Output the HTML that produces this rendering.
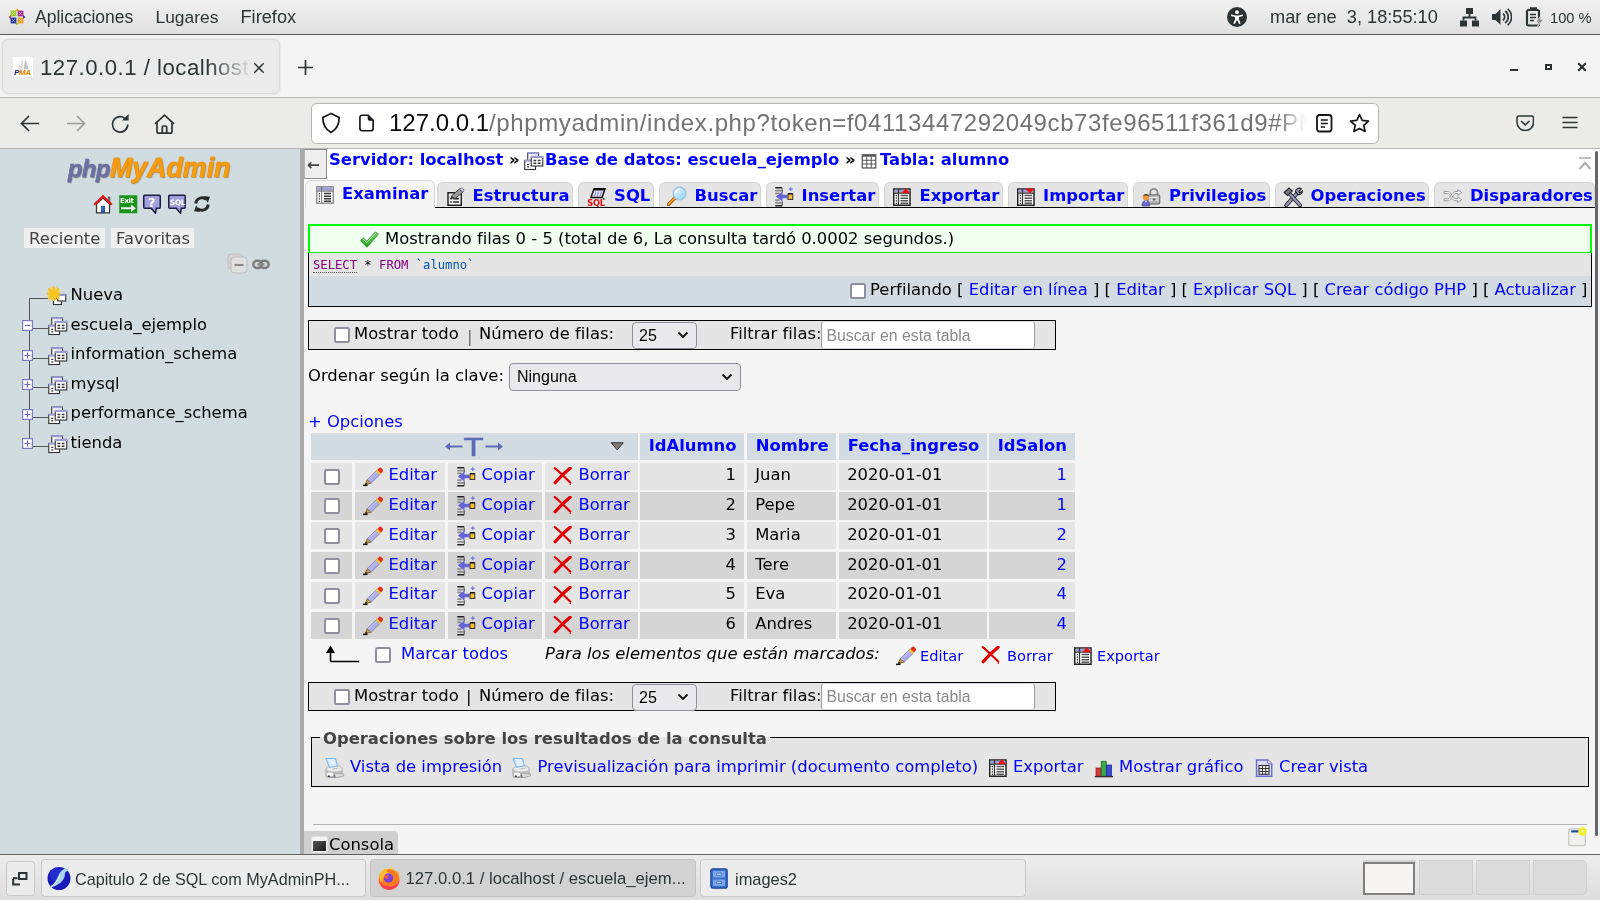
<!DOCTYPE html>
<html lang="es">
<head>
<meta charset="utf-8">
<title>127.0.0.1 / localhost / escuela_ejemplo / alumno | phpMyAdmin</title>
<style>
*{box-sizing:border-box}
html,body{margin:0;padding:0}
body{width:1600px;height:900px;overflow:hidden;position:relative;background:#f5f5f5;font-family:"DejaVu Sans","Liberation Sans",sans-serif;font-size:16.4px;color:#000}
.abs{position:absolute}
svg{display:block}
a{color:#0000ff;text-decoration:none}
/* ---------- GNOME top bar ---------- */
#gtop{position:absolute;left:0;top:0;width:1600px;height:35px;background:linear-gradient(#f0f0f0,#e9e9e9 50%,#dfdfdf);border-bottom:1px solid #5a5a5a;font-family:"Liberation Sans","DejaVu Sans",sans-serif;font-size:17.500px;color:#2e3436}
#gtop span{position:absolute;top:7px;white-space:pre;line-height:20px}
/* ---------- Firefox chrome ---------- */
#fxtabs{position:absolute;left:0;top:35px;width:1600px;height:62px;background:#f4f4f4}
#fxtab{position:absolute;left:3px;top:4.500px;width:276px;height:53.500px;background:#ebebeb;border-radius:5px;box-shadow:0 0 3px rgba(0,0,0,.3)}
#fxnav{position:absolute;left:0;top:97px;width:1600px;height:52px;background:#ebebe9;border-top:1px solid #b9b9b9;border-bottom:1px solid #b4b4b4}
#urlbar{position:absolute;left:311px;top:5px;width:1068px;height:40.500px;background:#fff;border:1px solid #b4b4b4;border-radius:5.500px}
.fxfont{font-family:"Liberation Sans","DejaVu Sans",sans-serif}
/* ---------- phpMyAdmin ---------- */
#side{position:absolute;left:0;top:149px;width:300px;height:705px;background:#d0dce0}
#resizer{position:absolute;left:300px;top:149px;width:4px;height:705px;background:#aaa}
#main{position:absolute;left:304px;top:149px;width:1296px;height:705px;background:#f5f5f5;overflow:hidden}
/* ---------- bottom task bar ---------- */
#gbot{position:absolute;left:0;top:854px;width:1600px;height:46px;background:linear-gradient(#ececec,#dedede);border-top:1px solid #5f5f5f;font-family:"Liberation Sans","DejaVu Sans",sans-serif;font-size:16.400px;color:#2e3436}
.tb{position:absolute;background:#ececec;border:1px solid #c6c6c6;border-radius:3.500px}

/* generic positioned text */
.t{position:absolute;white-space:pre;line-height:20px;height:20px}
.b{font-weight:bold}
.blue{color:#0000ff}
.ic{position:absolute;width:20px;height:20px}
/* top menu tabs */
.tab{position:absolute;top:182px;height:25px;background:#e5e5e5;border:1px solid #d5d5d5;border-bottom:0;border-radius:6px 6px 0 0}
.tab.act{top:179.500px;height:28.500px;background:#f5f5f5;border-color:#d5d5d5}
/* boxes */
.navbox{position:absolute;left:308px;width:748px;height:30px;background:#e5e5e5;border:1.300px solid #000}
.cb{position:absolute;width:16px;height:16px;background:#fff;border:2px solid #8f8f9d;border-radius:2.5px}
.sel{position:absolute;background:#e9e9ed;border:1px solid #8f8f9d;border-radius:4px}
.inp{position:absolute;background:#fff;border:1px solid #9a9aa8;border-top-color:#d8d8e0;border-bottom-color:#d8d8e0;border-radius:3.500px}
/* data table */
#dt{position:absolute;left:308.5px;top:430px;border-collapse:separate;border-spacing:2.5px;table-layout:fixed;font-size:16.4px}
#dt td,#dt th{padding:0;height:27.25px;line-height:20px;white-space:nowrap;position:relative;overflow:hidden}
#dt th{background:#d3dce3;color:#0000ff;font-weight:bold;text-align:left;height:26.5px}
#dt tr.o td{background:#e5e5e5}
#dt tr.e td{background:#d5d5d5}
#dt td.r{text-align:right;padding-right:8px}
#dt td.l{text-align:left;padding-left:9px}
.c{position:absolute;white-space:nowrap;line-height:20px;overflow:hidden}
.c>span,.c>a{line-height:20px;white-space:pre}
#wrap{position:absolute;left:0;top:0;width:1600px;height:900px;overflow:hidden;will-change:transform}
</style>
</head>
<body>
<div id="wrap">
<svg width="0" height="0" style="position:absolute"><defs>
<linearGradient id="g-pen" x1="0" y1="0" x2="1" y2="1"><stop offset="0" stop-color="#d8d8ff"/><stop offset="1" stop-color="#8c8cd0"/></linearGradient>
<linearGradient id="g-lens" x1="0" y1="0" x2="1" y2="1"><stop offset="0" stop-color="#e8fbff"/><stop offset="1" stop-color="#8fd0f5"/></linearGradient>
<linearGradient id="g-ok" x1="0" y1="0" x2="0" y2="1"><stop offset="0" stop-color="#7be06a"/><stop offset="1" stop-color="#1f9a1f"/></linearGradient>
<linearGradient id="g-prn" x1="0" y1="0" x2="0" y2="1"><stop offset="0" stop-color="#e4e4e4"/><stop offset="1" stop-color="#989898"/></linearGradient>
<!-- database (stacked windows) -->
<symbol id="i-db" viewBox="0 0 16 16">
<rect x="3" y="1.6" width="8.6" height="8" fill="#fff" stroke="#333" stroke-width=".9"/><rect x="3" y="1" width="8.6" height="1.6" fill="#9c9cd6"/>
<rect x=".6" y="7.6" width="8.6" height="7.2" fill="#fff" stroke="#333" stroke-width=".9"/><rect x=".4" y="6.8" width="9" height="1.7" fill="#9c9cd6"/>
<path d="M2.6 10.6h1.6M2.6 12.6h1.6" stroke="#333" stroke-width="1"/>
<rect x="5.8" y="4.8" width="9.2" height="7.2" fill="#fff" stroke="#333" stroke-width=".9"/><rect x="5.4" y="3.8" width="10" height="1.8" fill="#9c9cd6"/>
<path d="M7.6 7.6h2.2M11 7.6h2.2M7.6 9.8h2.2M11 9.8h2.2" stroke="#333" stroke-width="1.1"/>
</symbol>
<!-- table (grid) -->
<symbol id="i-tbl" viewBox="0 0 16 16">
<rect x="2" y="2.6" width="12" height="11.6" fill="#fff" stroke="#444" stroke-width="1"/>
<rect x="2" y="2.2" width="12" height="2" fill="#555"/>
<path d="M2 7.4h12M2 10.6h12M6 4v10M10 4v10" stroke="#555" stroke-width=".9"/>
</symbol>
<!-- browse -->
<symbol id="i-browse" viewBox="0 0 16 16">
<rect x="1.4" y="1.4" width="13.2" height="13.2" fill="#fff" stroke="#808080" stroke-width="1"/>
<rect x="1.9" y="1.9" width="12.2" height="2.6" fill="#9c9cd6"/>
<path d="M1.4 4.9h13.2M5.3 1.4v13.2" stroke="#808080" stroke-width=".9"/>
<path d="M3 6.8h1M3 8.9h1M3 11h1M3 13h1" stroke="#222" stroke-width="1"/>
<path d="M7.2 6.8h5.6M7.2 8.9h5.6M7.2 11h5.6M7.2 13h5.6" stroke="#333" stroke-width="1.2"/>
</symbol>
<!-- structure -->
<symbol id="i-props" viewBox="0 0 16 16">
<rect x="1.6" y="4.6" width="10.6" height="10" fill="#f4f4f4" stroke="#111" stroke-width="1.1"/>
<path d="M3.4 9.4h1.2M5.8 9.4h4.6M3.4 12h1.2M5.8 12h4.6" stroke="#222" stroke-width="1.3"/>
<path d="M4.2 7.4L10.6 1.6L13.6 4.2L7.2 9.2Z" fill="#9a9a9a" stroke="#444" stroke-width=".8"/>
<path d="M10.6 1.6L13.6 4.2L14.4 2.2L12.4 .8Z" fill="#c8c8e8" stroke="#666" stroke-width=".6"/>
<path d="M4.2 7.4L3.2 9.4L7.2 9.2Z" fill="#333"/>
</symbol>
<!-- sql -->

<!-- search -->
<symbol id="i-search" viewBox="0 0 16 16">
<path d="M1.2 14.8L7.2 8.6" stroke="#a85a08" stroke-width="2.6" stroke-linecap="round"/>
<path d="M1.3 14.5L7 8.6" stroke="#f89a20" stroke-width="1.5" stroke-linecap="round"/>
<circle cx="10" cy="6" r="5" fill="url(#g-lens)" stroke="#9cc4e4" stroke-width="1.2"/>
<path d="M7 5.2A3.4 3.4 0 0 1 10.4 2.6" stroke="#fff" stroke-width="1.2" fill="none"/>
</symbol>
<!-- insert / copy -->
<symbol id="i-ins" viewBox="0 0 16 16">
<path d="M1 .6h5.600M1 15h5.600" stroke="#222" stroke-width="1.200"/>
<path d="M1 2.900h5.200M1 5.100h3.400M1 10.500h3.400M1 12.700h5.200" stroke="#8a8a8a" stroke-width="1.300"/>
<path d="M6.600 1.200v3.200M6.600 11.400v3.200" stroke="#555" stroke-width=".9"/>
<path d="M1.400 7.600L6.800 3.600V6.200H10.800V9H6.800V11.600Z" fill="#6464d8"/>
<rect x="11.200" y="5.600" width="3.800" height="4.400" fill="#f8c030" stroke="#333" stroke-width=".8"/>
<path d="M11.200 5.300h3.800" stroke="#111" stroke-width="1"/>
<path d="M13.400 .2v3M11.900 1.700h3" stroke="#7070e0" stroke-width=".9"/>
</symbol>
<!-- export -->
<symbol id="i-export" viewBox="0 0 16 16">
<rect x="1.4" y="1.6" width="13" height="13" fill="#fff" stroke="#222" stroke-width="1.2"/>
<rect x="2" y="2.2" width="11.8" height="2.2" fill="#9c9cd6"/>
<path d="M1.4 4.9h13M5.2 1.6v13" stroke="#333" stroke-width="1"/>
<path d="M3 6.8h1M3 8.9h1M3 11h1M3 13h1" stroke="#222" stroke-width="1"/>
<path d="M6.8 6.8h6M6.8 8.9h6M6.8 11h6M6.8 13h6" stroke="#555" stroke-width="1.2"/>
<path d="M7.6 5L11 1L14.6 5Z" fill="#e81010"/>
</symbol>
<!-- import -->
<symbol id="i-import" viewBox="0 0 16 16">
<rect x="1.4" y="1.6" width="13" height="13" fill="#fff" stroke="#222" stroke-width="1.2"/>
<rect x="2" y="2.2" width="11.8" height="2.2" fill="#9c9cd6"/>
<path d="M1.4 4.9h13M5.2 1.6v13" stroke="#333" stroke-width="1"/>
<path d="M3 6.8h1M3 8.9h1M3 11h1M3 13h1" stroke="#222" stroke-width="1"/>
<path d="M6.8 6.8h6M6.8 8.9h6M6.8 11h6M6.8 13h6" stroke="#555" stroke-width="1.2"/>
<path d="M7.4 1.2H14.8L11.1 5.2Z" fill="#e81010"/>
</symbol>
<!-- privileges -->
<symbol id="i-rights" viewBox="0 0 16 16">
<path d="M7.4 6.4V4.4A2.9 2.9 0 0 1 13.2 4.400V6.400" fill="none" stroke="#8a8a8a" stroke-width="1.5"/>
<rect x="5.4" y="6.2" width="9.6" height="7.4" rx="1" fill="#b4b4b4" stroke="#6a6a6a" stroke-width=".9"/>
<path d="M6.4 8.4h7.6M6.4 10.4h7.6" stroke="#ececec" stroke-width="1"/>
<path d="M9.4 9.2h2.2v1.6H9.400Z" fill="#666"/>
<circle cx="3.9" cy="8.3" r="2.4" fill="#f0943c"/>
<path d="M1.4 7.600A2.600 2.600 0 0 1 6.400 7.400L5.200 6.800H2.400Z" fill="#3a3020"/>
<path d="M.8 15.2C.8 11.800 2.200 11 3.900 11S7 11.800 7 15.200Z" fill="#6a6ad0" stroke="#44448c" stroke-width=".6"/>
<path d="M3.100 11L3.900 12.600L4.700 11Z" fill="#fff"/>
</symbol>
<!-- operations (tools) -->
<symbol id="i-ops" viewBox="0 0 16 16">
<path d="M2.600 14.600L11.800 4.400" stroke="#222" stroke-width="3.200" stroke-linecap="round"/>
<path d="M2.600 14.600L11.800 4.400" stroke="#9a9ac0" stroke-width="1.700" stroke-linecap="round"/>
<path d="M10 3.400A3 3 0 0 1 14.600 1.400L12.600 3.600L13.400 4.800L15.600 3.200A3 3 0 0 1 11.800 6Z" fill="#a4a4c8" stroke="#222" stroke-width=".9"/>
<path d="M13.600 14.600L5 5" stroke="#222" stroke-width="3.200" stroke-linecap="round"/>
<path d="M13.600 14.600L5 5" stroke="#9a9ac0" stroke-width="1.700" stroke-linecap="round"/>
<path d="M1 4.400L4.800 .8L7.400 3.200L3.600 6.800Z" fill="#7a7a84" stroke="#222" stroke-width=".9"/>
</symbol>
<!-- triggers (shuffle) -->
<symbol id="i-trig" viewBox="0 0 16 16">
<path d="M.8 4.400H4.200C6.800 4.400 7.800 10.200 10.400 10.200H11.800V8.800L15 11L11.800 13.200V11.800H10.400C6.800 11.800 5.800 6 4.200 6H.8Z" fill="#f6f6f6" stroke="#9a9a9a" stroke-width=".8"/>
<path d="M.8 10.200H4.200C5.800 10.200 6.800 4.400 10.400 4.400H11.800V3L15 5.200L11.800 7.400V6H10.400C7.800 6 6.800 11.800 4.200 11.800H.8Z" fill="#f6f6f6" stroke="#9a9a9a" stroke-width=".8"/>
</symbol>
<!-- success check -->
<symbol id="i-ok" viewBox="0 0 16 16">
<path d="M1.200 9.400L3.600 7.200L6.200 9.800L13.200 2.400L15.400 4.200L6.400 14.600Z" fill="url(#g-ok)" stroke="#2a8a2a" stroke-width=".7"/>
<path d="M3.600 8.200L6.200 10.800L13.200 3.400" stroke="#b8f4a8" stroke-width=".8" fill="none"/>
</symbol>
<!-- pencil -->
<symbol id="i-edit" viewBox="0 0 16 16">
<path d="M0 14.700H3.600" stroke="#111" stroke-width="1.200"/>
<path d="M1.800 14.200L3.400 10L6.600 12.800Z" fill="#c89a3c" stroke="#6a4a10" stroke-width=".6"/>
<path d="M1.600 14.400L2.300 12.600L3.700 13.800Z" fill="#111"/>
<path d="M3.400 10L11 2.600L14 5.600L6.600 12.800Z" fill="url(#g-pen)" stroke="#7a7ab8" stroke-width=".6"/>
<path d="M10.200 3.400L11.500 2.100L14.500 5.100L13.200 6.400Z" fill="#f4c428"/>
<path d="M11.500 2.100L12.700 .9A1.400 1.400 0 0 1 14.600 .8L15.600 1.800A1.400 1.400 0 0 1 15.600 3.800L14.500 5.100Z" fill="#e82a1a"/>
</symbol>
<!-- delete -->
<symbol id="i-drop" viewBox="0 0 16 16">
<path d="M1.400 .9C5 3.600 10 8.800 13.800 12.400" stroke="#e00000" stroke-width="1.700" stroke-linecap="round" fill="none"/>
<path d="M13.700 1C10.200 3.800 4.800 9 1.700 12.600" stroke="#e00000" stroke-width="2.600" stroke-linecap="round" fill="none"/>
<circle cx="13.800" cy="13.800" r=".6" fill="#e00000"/>
</symbol>
<!-- printer -->
<symbol id="i-print" viewBox="0 0 16 16">
<path d="M.6 9.200C.6 7.400 2.600 6.700 4.400 6.900L9.800 6.200C12.200 6 13.800 7.200 13.800 8.800V12.200L15 13V14.400L8.400 16H3.600C1.600 16 .6 15 .6 13.600Z" fill="url(#g-prn)" stroke="#a4a4a4" stroke-width=".5"/>
<ellipse cx="7.400" cy="8.900" rx="5.800" ry="1.900" fill="#ececec"/>
<path d="M5.800 8.800L10.800 8.200" stroke="#bdbdbd" stroke-width=".9"/>
<path d="M.7 .4H8.400L10 6.300L3.600 7.500Z" fill="#c4e2fc" stroke="#7ab4ea" stroke-width=".8"/>
<path d="M2.600 1.200H7.600L8.800 5.800L4.400 6.600Z" fill="#e0f0ff"/>
<path d="M7.600 12.400L14.600 12.800V14.400L8.200 15.800Z" fill="#dcdcdc" stroke="#9a9a9a" stroke-width=".4"/>
<path d="M1.400 12.200C3 11.400 5 11.600 6.600 12.400L6.400 14.600H1.400Z" fill="#f6f6f6"/>
<circle cx="3.100" cy="14.500" r=".7" fill="#333"/>
<path d="M7.400 13.400L8.200 15.600" stroke="#5a5a9a" stroke-width=".6"/>
</symbol>
<!-- chart -->
<symbol id="i-chart" viewBox="0 0 16 16">
<rect x="1.600" y="8" width="4" height="6.600" fill="#d83a3a" stroke="#8c1c1c" stroke-width=".6"/>
<rect x="5.800" y="2.600" width="4" height="12" fill="#3aa84a" stroke="#1c6c2a" stroke-width=".6"/>
<rect x="10" y="5.600" width="4" height="9" fill="#3a4ad8" stroke="#1c2a8c" stroke-width=".6"/>
<path d="M.600 14.900H15.200" stroke="#3a2a2a" stroke-width="1.100"/>
</symbol>
<!-- view -->
<symbol id="i-view" viewBox="0 0 16 16">
<path d="M2 1.600H11L14.200 4.600V14.600H2Z" fill="#d8dcfa" stroke="#6a6ad0" stroke-width="1.100"/>
<path d="M11 1.600V4.600H14.200" fill="#fff" stroke="#6a6ad0" stroke-width=".8"/>
<rect x="4" y="6" width="8" height="7" fill="#fff" stroke="#333" stroke-width=".9"/>
<path d="M4 8.400h8M4 10.700h8M6.700 6v7M9.400 6v7" stroke="#333" stroke-width=".8"/>
</symbol>
<!-- new window -->
<symbol id="i-win" viewBox="0 0 16 16">
<rect x="1.400" y="1.400" width="13.200" height="13.400" rx="1.600" fill="#f0f0ee" stroke="#c6c8c4" stroke-width="1"/>
<path d="M3.400 3.500H10" stroke="#1c4a94" stroke-width="1.700"/>
<circle cx="12.400" cy="3.500" r="3.400" fill="#f4ee2a"/><circle cx="12.400" cy="3.500" r=".9" fill="#fffde0"/>
</symbol>
<!-- home -->
<symbol id="i-home" viewBox="0 0 16 16">
<path d="M12 2.400V6L13.600 7.400V2.400Z" fill="#888" stroke="#444" stroke-width=".5"/>
<path d="M2.800 8V15H13.200V8L8 3.200Z" fill="#fff" stroke="#333" stroke-width="1"/>
<path d="M1 8.600L8 2L15 8.600" fill="none" stroke="#e01818" stroke-width="1.900" stroke-linejoin="miter"/>
<rect x="6.600" y="10" width="2.800" height="5" fill="#2a6ab8" stroke="#1a3a6a" stroke-width=".5"/>
</symbol>
<!-- exit -->

<!-- help -->

<!-- sql help -->

<!-- reload -->
<symbol id="i-reload" viewBox="0 0 16 16">
<path d="M3 7.600A5 5 0 0 1 11.400 4.400" fill="none" stroke="#2a2a2a" stroke-width="2.300"/>
<path d="M9.400 1.600L14.400 2.200L12.600 7Z" fill="#2a2a2a"/>
<path d="M13 8.400A5 5 0 0 1 4.600 11.600" fill="none" stroke="#2a2a2a" stroke-width="2.300"/>
<path d="M6.600 14.400L1.600 13.800L3.400 9Z" fill="#2a2a2a"/>
</symbol>
<!-- new db -->
<symbol id="i-newdb" viewBox="0 0 16 16">
<rect x="5.200" y="10.200" width="6.400" height="4.600" fill="#fff" stroke="#333" stroke-width=".9"/>
<rect x="8.600" y="7" width="6.400" height="5" fill="#fff" stroke="#333" stroke-width=".9"/><rect x="8.400" y="6.200" width="6.800" height="1.500" fill="#8c8cd0"/>
<path d="M5.400 .4V12M0 6.200H10.800M1.200 2L9.600 10.400M9.600 2L1.200 10.400" stroke="#f8c010" stroke-width="1.700"/>
<path d="M3.200 .8L7.600 11.600M7.600 .8L3.200 11.600M.3 4L10.500 8.400M.3 8.400L10.500 4" stroke="#f8cc30" stroke-width=".9"/>
<circle cx="5.400" cy="6.200" r="2.100" fill="#fcc010"/>
</symbol>
</defs></svg>

<!-- GNOME TOP BAR -->
<div id="gtop">
<!-- CentOS-like logo -->
<svg class="abs" style="left:8px;top:8px" width="18" height="18" viewBox="0 0 18 18">
<path d="M9 .6L11.200 3H6.800Z" fill="#f0a020"/><path d="M9 17.400L11.200 15H6.800Z" fill="#9ccd2a"/><path d="M.6 9L3 6.800V11.200Z" fill="#a8328c"/><path d="M17.400 9L15 6.800V11.200Z" fill="#2a3a9c"/>
<rect x="2.600" y="2.600" width="5.800" height="5.800" fill="#9ccd2a"/><rect x="9.600" y="2.600" width="5.800" height="5.800" fill="#a8328c"/>
<rect x="2.600" y="9.600" width="5.800" height="5.800" fill="#2a3a9c"/><rect x="9.600" y="9.600" width="5.800" height="5.800" fill="#f0a020"/>
<path d="M4 4L7 7M7 4L4 7M11 4L14 7M14 4L11 7M4 11L7 14M7 11L4 14M11 11L14 14M14 11L11 14" stroke="#fff" stroke-opacity=".45" stroke-width=".8"/>
</svg>
<span style="left:35px">Aplicaciones</span>
<span style="left:155.500px;font-size:17.400px">Lugares</span>
<span style="left:240.500px;font-size:18.200px;top:6.700px">Firefox</span>
<!-- accessibility -->
<svg class="abs" style="left:1226.500px;top:6.500px" width="20" height="20" viewBox="0 0 20 20"><circle cx="10" cy="10" r="10" fill="#2e3436"/><circle cx="10" cy="5.200" r="1.900" fill="#fff"/><path d="M4.200 7.600L8.400 8.400H11.600L15.800 7.600L16 9L12 10V12.400L13.600 16.600L12.200 17.100L10 12.800L7.800 17.100L6.400 16.600L8 12.400V10L4 9Z" fill="#fff"/></svg>
<span style="left:1270px;font-size:18.200px">mar ene  3, 18:55:10</span>
<!-- network -->
<svg class="abs" style="left:1460px;top:8px" width="19" height="19" viewBox="0 0 19 19"><rect x="6" y="0" width="7" height="6" fill="#2e3436"/><rect x="0" y="12.500" width="7" height="6" fill="#2e3436"/><rect x="12" y="12.500" width="7" height="6" fill="#2e3436"/><path d="M9.500 6V9.500M3.500 12.500V9.500H15.500V12.500" stroke="#2e3436" stroke-width="1.800" fill="none"/></svg>
<!-- volume -->
<svg class="abs" style="left:1492px;top:8px" width="20" height="18" viewBox="0 0 20 18"><path d="M0 6H3.500L8.500 1.200V16.800L3.500 12H0Z" fill="#2e3436"/><path d="M11 5.500A4.500 4.500 0 0 1 11 12.500" stroke="#2e3436" stroke-width="1.700" fill="none"/><path d="M13.200 3A7.500 7.500 0 0 1 13.200 15" stroke="#2e3436" stroke-width="1.700" fill="none"/><path d="M15.600 .8A10.500 10.500 0 0 1 15.600 17.200" stroke="#2e3436" stroke-width="1.700" fill="none"/></svg>
<!-- battery -->
<svg class="abs" style="left:1525px;top:7px" width="20" height="20" viewBox="0 0 20 20"><path d="M5 1.200H11V3" stroke="#2e3436" stroke-width="2" fill="none"/><rect x="2" y="3" width="12" height="15.500" rx="1.500" fill="none" stroke="#2e3436" stroke-width="2.200"/><path d="M5 7.500H11M5 10.500H11M5 13.500H9" stroke="#2e3436" stroke-width="1.600"/><path d="M15.500 9L11 15H14L12.500 19.500L18.500 12.500H15Z" fill="#8a8a8a" stroke="#e6e6e6" stroke-width=".7"/></svg>
<span style="left:1550px;font-size:14.700px;top:7.500px">100 %</span>
</div>

<!-- FIREFOX CHROME -->
<div id="fxtabs">
<div id="fxtab"></div>
<!-- favicon -->
<svg class="abs" style="left:13px;top:22px" width="20" height="20" viewBox="0 0 20 20"><rect width="20" height="20" fill="#fff"/><path d="M7 12.500C7.500 8 8.500 4.500 9.500 1.500C9.800 6 9.600 9.500 9.400 12.500Z" fill="#d4d4d4"/><path d="M10.600 12.500C11 8 11.600 5 12.400 2.500C14 6 15 9.500 15.600 12.500Z" fill="#c4c4c4"/><path d="M4.500 12.500C5 10 5.800 8 6.800 6.400C6.900 8.500 6.700 10.500 6.400 12.500Z" fill="#e0e0e0"/>
<text x="1.200" y="18.200" font-family="'Liberation Sans','DejaVu Sans',sans-serif" font-size="7.800" font-weight="bold" font-style="italic" fill="#2a2a6a" stroke="#2a2a6a" stroke-width=".2" letter-spacing="-.3">P<tspan fill="#e88a10" stroke="#e88a10">MA</tspan></text></svg>
<span class="abs fxfont" style="left:40px;top:18px;width:212px;height:30px;line-height:30px;font-size:22.200px;letter-spacing:.5px;color:#2e3436;white-space:nowrap;overflow:hidden;-webkit-mask-image:linear-gradient(90deg,#000 0,#000 168px,rgba(0,0,0,.12) 207px,transparent 212px);mask-image:linear-gradient(90deg,#000 0,#000 168px,rgba(0,0,0,.12) 207px,transparent 212px)">127.0.0.1 / localhost / escuela_ejemplo / alumno | phpMyAdmin 4.4.15.10</span>
<svg class="abs" style="left:253px;top:26.500px" width="12" height="12" viewBox="0 0 12 12"><path d="M1.300 1.300L10.700 10.700M10.700 1.300L1.300 10.700" stroke="#2e3436" stroke-width="1.500"/></svg>
<svg class="abs" style="left:297px;top:24px" width="17" height="17" viewBox="0 0 17 17"><path d="M8.500 1V16M1 8.500H16" stroke="#2e3436" stroke-width="1.700"/></svg>
<!-- window controls -->
<div class="abs" style="left:1510px;top:33.500px;width:8px;height:2.500px;background:#2e3436"></div>
<div class="abs" style="left:1545px;top:28.500px;width:6.500px;height:6.500px;border:2px solid #2e3436"></div>
<svg class="abs" style="left:1577px;top:26.500px" width="10" height="10" viewBox="0 0 10 10"><path d="M1.200 1.200L8.800 8.800M8.800 1.200L1.200 8.800" stroke="#2e3436" stroke-width="2.200"/></svg>
</div>
<div id="fxnav">
<!-- back -->
<svg class="abs" style="left:20px;top:17px" width="20" height="17" viewBox="0 0 20 17"><path d="M1.500 8.500H19M9 1L1.500 8.500L9 16" fill="none" stroke="#2e3436" stroke-width="1.700"/></svg>
<!-- forward -->
<svg class="abs" style="left:65.500px;top:17px" width="20" height="17" viewBox="0 0 20 17"><path d="M1 8.500H18.500M11 1L18.500 8.500L11 16" fill="none" stroke="#9c9c9c" stroke-width="1.700"/></svg>
<!-- reload -->
<svg class="abs" style="left:110px;top:16px" width="21" height="20" viewBox="0 0 21 20"><path d="M17.800 10.500A7.700 7.700 0 1 1 14.800 4.300" fill="none" stroke="#2e3436" stroke-width="1.700"/><path d="M12 6.400H18.600V0Z" fill="#2e3436"/></svg>
<!-- home -->
<svg class="abs" style="left:154px;top:15.500px" width="21" height="21" viewBox="0 0 21 21"><path d="M1 9.800L10.500 1.200L20 9.800" fill="none" stroke="#2e3436" stroke-width="1.700" stroke-linejoin="round"/><path d="M3 8.500V17.500Q3 19.200 4.700 19.200H16.300Q18 19.200 18 17.500V8.500" fill="none" stroke="#2e3436" stroke-width="1.700"/><path d="M8.300 19V13.200Q8.300 12 9.500 12H11.500Q12.700 12 12.700 13.200V19" fill="none" stroke="#2e3436" stroke-width="1.700"/></svg>
<div id="urlbar"></div>
<!-- shield -->
<svg class="abs" style="left:321px;top:14px" width="20" height="22" viewBox="0 0 20 22"><path d="M10 1.500L18.200 5.500C18.200 12 15.500 17.500 10 20.500C4.500 17.500 1.800 12 1.800 5.500Z" fill="none" stroke="#15141a" stroke-width="1.700" stroke-linejoin="round"/></svg>
<!-- page -->
<svg class="abs" style="left:358.500px;top:15.500px" width="15.500" height="18" viewBox="0 0 17 19"><path d="M3.500 1H10L15.500 6.500V15.500Q15.500 18 13 18H3.500Q1 18 1 15.500V3.500Q1 1 3.500 1Z" fill="none" stroke="#15141a" stroke-width="1.800"/><path d="M9.500 1L15.500 7H11.500Q9.500 7 9.500 5Z" fill="#15141a"/></svg>
<span class="abs fxfont" style="left:389px;top:9px;height:32px;line-height:32px;font-size:24px;color:#0c0c0d;white-space:pre;width:918px;overflow:hidden;-webkit-mask-image:linear-gradient(90deg,#000 0,#000 890px,rgba(0,0,0,.15) 912px,transparent 918px);mask-image:linear-gradient(90deg,#000 0,#000 890px,rgba(0,0,0,.15) 912px,transparent 918px)">127.0.0.1<span style="color:#737373;letter-spacing:.6px">/phpmyadmin/index.php?token=f04113447292049cb73fe96511f361d9#PMAURL-3:sql.php?db=escuela_ejemplo</span></span>
<!-- reader -->
<svg class="abs" style="left:1315.500px;top:15.500px" width="17" height="19" viewBox="0 0 17 19"><rect x="1" y="1" width="14.500" height="16.500" rx="2.500" fill="none" stroke="#15141a" stroke-width="1.800"/><path d="M4.800 6H11.800M4.800 9.500H11.800M4.800 13H9" stroke="#15141a" stroke-width="1.600"/></svg>
<!-- star -->
<svg class="abs" style="left:1348.500px;top:15px" width="21" height="20" viewBox="0 0 21 20"><path d="M10.500 1.500L13.200 7.300L19.500 8L14.800 12.300L16.100 18.500L10.500 15.400L4.900 18.500L6.200 12.300L1.500 8L7.800 7.300Z" fill="none" stroke="#15141a" stroke-width="1.700" stroke-linejoin="round"/></svg>
<!-- pocket -->
<svg class="abs" style="left:1515.500px;top:16.500px" width="18.500" height="16.500" viewBox="0 0 19 17"><path d="M3 1H16Q18 1 18 3V7.500C18 12.500 14 16 9.500 16C5 16 1 12.500 1 7.500V3Q1 1 3 1Z" fill="none" stroke="#2e3436" stroke-width="1.600"/><path d="M5.200 6.200L9.500 10.200L13.800 6.200" fill="none" stroke="#2e3436" stroke-width="1.600"/></svg>
<!-- hamburger -->
<svg class="abs" style="left:1562px;top:18px" width="16" height="13" viewBox="0 0 16 13"><path d="M.5 1.500H15.500M.5 6.500H15.500M.5 11.500H15.500" stroke="#2e3436" stroke-width="1.500"/></svg>
</div>

<!-- PMA -->
<div id="side"></div>
<div id="resizer"></div>
<div id="main"></div>
<!-- sidebar content -->
<div class="abs" id="logo" style="left:68px;top:150px;width:175px;height:36px;font-family:'Liberation Sans','DejaVu Sans',sans-serif;font-weight:bold;font-style:italic;white-space:nowrap;line-height:36px;filter:blur(.5px)"><span style="font-size:23.500px;color:#6d6fa0;letter-spacing:-.4px;-webkit-text-stroke:.6px #6d6fa0;text-shadow:.8px 1.200px 1.200px rgba(50,50,70,.6)">php</span><span style="font-size:26.800px;color:#f89c10;letter-spacing:0;-webkit-text-stroke:.7px #f0940c;text-shadow:0 0 1.200px #b87408,.8px 1.200px 1.200px rgba(120,80,20,.55)">MyAdmin</span></div>
<svg class="ic" style="left:93px;top:194px" viewBox="0 0 16 16"><use href="#i-home"/></svg>
<svg class="ic" style="left:118px;top:194px" viewBox="0 0 16 16"><rect x="1" y="1" width="14.400" height="14.400" fill="#189418"/>
<text x="1.600" y="7" font-family="'DejaVu Sans','Liberation Sans',sans-serif" font-size="5.600" font-weight="bold" fill="#fff" letter-spacing="-.3">Exit</text>
<path d="M2.400 11.400H12" stroke="#fff" stroke-width="1.500"/><path d="M10.400 8.400L14.200 11.400L10.400 14.400Z" fill="#fff"/></svg>
<svg class="ic" style="left:142px;top:194px" viewBox="0 0 16 16"><path d="M1.400 1.800Q1.400 1 2.200 1H13.800Q14.600 1 14.600 1.800V10.600Q14.600 11.400 13.800 11.400H11.400L10.800 15.400L7.400 11.400H2.200Q1.400 11.400 1.400 10.600Z" fill="#a0a0dc" stroke="#1c1c44" stroke-width="1.200"/>
<text x="4.800" y="10.200" font-family="'DejaVu Sans','Liberation Sans',sans-serif" font-size="10.500" font-weight="bold" fill="#fff">?</text></svg>
<svg class="ic" style="left:167px;top:194px" viewBox="0 0 16 16"><path d="M1.400 1.800Q1.400 1 2.200 1H13.800Q14.600 1 14.600 1.800V10.600Q14.600 11.400 13.800 11.400H11.400L10.800 15.400L7.400 11.400H2.200Q1.400 11.400 1.400 10.600Z" fill="#a0a0dc" stroke="#1c1c44" stroke-width="1.200"/>
<text x="2.200" y="8.600" font-family="'DejaVu Sans','Liberation Sans',sans-serif" font-size="6" font-weight="bold" fill="#fff" letter-spacing="-.3">SQL</text></svg>
<svg class="ic" style="left:192px;top:194px" viewBox="0 0 16 16"><use href="#i-reload"/></svg>
<div class="abs" style="left:24px;top:228px;width:81px;height:20px;background:#f0f0f0"></div><span class="t" style="left:29px;top:229px;color:#444">Reciente</span>
<div class="abs" style="left:111px;top:228px;width:83px;height:20px;background:#f0f0f0"></div><span class="t" style="left:116px;top:229px;color:#444">Favoritas</span>
<svg class="abs" style="left:227px;top:253px" width="21" height="21" viewBox="0 0 21 21"><rect x="1" y="1" width="15" height="15" rx="3.500" fill="#d4d4d4" stroke="#c0c0c0"/><rect x="4" y="4" width="16" height="16" rx="3.500" fill="#e0e0e0" stroke="#bdbdbd"/><path d="M7.500 12H16.500" stroke="#8a8a8a" stroke-width="2.200"/></svg>
<svg class="abs" style="left:252px;top:258.500px" width="18" height="11" viewBox="0 0 18 11"><rect x="1.300" y="1.800" width="8.600" height="7.200" rx="3.600" fill="none" stroke="#7c7c7c" stroke-width="2.400"/><rect x="8.100" y="1.800" width="8.600" height="7.200" rx="3.600" fill="none" stroke="#7c7c7c" stroke-width="2.400"/><path d="M5.400 5.400H12.600" stroke="#8a8a8a" stroke-width="2.400"/></svg>
<div class="abs" style="left:29px;top:298px;width:1px;height:141px;background:#555"></div>
<div class="abs" style="left:29px;top:298px;width:19px;height:1px;background:#555"></div>
<svg class="ic" style="left:47px;top:286px" viewBox="0 0 16 16"><use href="#i-newdb"/></svg>
<span class="t" style="left:70.500px;top:285px">Nueva</span>
<div class="abs" style="left:33px;top:328px;width:15px;height:1px;background:#555"></div>
<svg class="abs" style="left:22px;top:320px" width="11" height="11" viewBox="0 0 11 11"><rect x=".6" y=".6" width="9.800" height="9.800" fill="#fff" stroke="#7c7cc4" stroke-width="1.200"/><path d="M3 5.500H8" stroke="#6c6cb8" stroke-width="1.200"/></svg>
<svg class="ic" style="left:47.500px;top:316.0px" viewBox="0 0 16 16"><use href="#i-db"/></svg>
<span class="t" style="left:70.500px;top:315px">escuela_ejemplo</span>
<div class="abs" style="left:33px;top:358px;width:15px;height:1px;background:#555"></div>
<svg class="abs" style="left:22px;top:350px" width="11" height="11" viewBox="0 0 11 11"><rect x=".6" y=".6" width="9.800" height="9.800" fill="#fff" stroke="#7c7cc4" stroke-width="1.200"/><path d="M2.500 5.500H8.500M5.500 2.500V8.500" stroke="#6c6cb8" stroke-width="1.200"/></svg>
<svg class="ic" style="left:47.500px;top:345.6px" viewBox="0 0 16 16"><use href="#i-db"/></svg>
<span class="t" style="left:70.500px;top:344px">information_schema</span>
<div class="abs" style="left:33px;top:387px;width:15px;height:1px;background:#555"></div>
<svg class="abs" style="left:22px;top:379px" width="11" height="11" viewBox="0 0 11 11"><rect x=".6" y=".6" width="9.800" height="9.800" fill="#fff" stroke="#7c7cc4" stroke-width="1.200"/><path d="M2.500 5.500H8.500M5.500 2.500V8.500" stroke="#6c6cb8" stroke-width="1.200"/></svg>
<svg class="ic" style="left:47.500px;top:375.2px" viewBox="0 0 16 16"><use href="#i-db"/></svg>
<span class="t" style="left:70.500px;top:374px">mysql</span>
<div class="abs" style="left:33px;top:417px;width:15px;height:1px;background:#555"></div>
<svg class="abs" style="left:22px;top:409px" width="11" height="11" viewBox="0 0 11 11"><rect x=".6" y=".6" width="9.800" height="9.800" fill="#fff" stroke="#7c7cc4" stroke-width="1.200"/><path d="M2.500 5.500H8.500M5.500 2.500V8.500" stroke="#6c6cb8" stroke-width="1.200"/></svg>
<svg class="ic" style="left:47.500px;top:404.8px" viewBox="0 0 16 16"><use href="#i-db"/></svg>
<span class="t" style="left:70.500px;top:403px">performance_schema</span>
<div class="abs" style="left:33px;top:446px;width:15px;height:1px;background:#555"></div>
<svg class="abs" style="left:22px;top:438px" width="11" height="11" viewBox="0 0 11 11"><rect x=".6" y=".6" width="9.800" height="9.800" fill="#fff" stroke="#7c7cc4" stroke-width="1.200"/><path d="M2.500 5.500H8.500M5.500 2.500V8.500" stroke="#6c6cb8" stroke-width="1.200"/></svg>
<svg class="ic" style="left:47.500px;top:434.4px" viewBox="0 0 16 16"><use href="#i-db"/></svg>
<span class="t" style="left:70.500px;top:433px">tienda</span>

<div id="pma" style="position:absolute;left:0;top:0;width:1600px;height:854px;overflow:hidden">
<!-- white floating menubar -->
<div class="abs" style="left:304px;top:149px;width:1296px;height:58px;background:#fff"></div>
<div class="abs" style="left:435px;top:207px;width:1161px;height:1px;background:#000"></div>
<!-- go-back box -->
<div class="abs" style="left:304px;top:149px;width:23px;height:30px;background:#eee;border:1px solid #8c8c8c;border-left-color:#b4b4b4"></div>
<span class="t b" style="left:307px;top:155px;font-size:15.500px;color:#444">←</span>
<!-- breadcrumb -->
<span class="t b blue" style="left:329px;top:150px">Servidor: localhost</span>
<span class="t b" style="left:509px;top:150px;color:#000">»</span>
<svg class="ic" style="left:524px;top:151px" viewBox="0 0 16 16"><use href="#i-db"/></svg>
<span class="t b blue" style="left:545px;top:150px">Base de datos: escuela_ejemplo</span>
<span class="t b" style="left:845px;top:150px;color:#000">»</span>
<svg class="abs" style="left:860px;top:152px;width:18px;height:18px" viewBox="0 0 16 16"><use href="#i-tbl"/></svg>
<span class="t b blue" style="left:880px;top:150px">Tabla: alumno</span>
<!-- tabs -->
<div class="tab act" style="left:304.5px;width:130px"></div>
<svg class="ic" style="left:315px;top:185px" viewBox="0 0 16 16"><use href="#i-browse"/></svg>
<span class="t b blue" style="left:342px;top:184px">Examinar</span>

<div class="tab" style="left:437px;width:135.5px"></div>
<svg class="ic" style="left:446px;top:187px" viewBox="0 0 16 16"><use href="#i-props"/></svg>
<span class="t b blue" style="left:472.6px;top:186px">Estructura</span>

<div class="tab" style="left:578px;width:75.75px"></div>
<svg class="ic" style="left:587px;top:187px" viewBox="0 0 16 16"><path d="M5.6 1.4H14.4L12 8.4H3.2Z" fill="#e8e8ff" stroke="#111" stroke-width="1.2"/>
<path d="M5.6 1.4H14.4L14 2.8H5.2Z" fill="#111"/>
<path d="M7.2 3.6L5.8 7.6M9.4 3.6L8 7.6M11.6 3.6L10.2 7.6" stroke="#8a8ad0" stroke-width=".9"/>
<path d="M12.4 8.2L14.6 9.6L13 10.4" fill="#333"/>
<text x="0.2" y="15.2" font-family="'DejaVu Sans','Liberation Sans',sans-serif" font-size="6.6" font-weight="bold" fill="#e01010" letter-spacing="-.2">SQL</text></svg>
<span class="t b blue" style="left:614.1px;top:186px">SQL</span>

<div class="tab" style="left:659.25px;width:101.5px"></div>
<svg class="ic" style="left:667px;top:186px" viewBox="0 0 16 16"><use href="#i-search"/></svg>
<span class="t b blue" style="left:694.6px;top:186px">Buscar</span>

<div class="tab" style="left:766px;width:112.75px"></div>
<svg class="ic" style="left:774px;top:187px" viewBox="0 0 16 16"><use href="#i-ins"/></svg>
<span class="t b blue" style="left:801.6px;top:186px">Insertar</span>

<div class="tab" style="left:884.25px;width:118.25px"></div>
<svg class="ic" style="left:892px;top:187px" viewBox="0 0 16 16"><use href="#i-export"/></svg>
<span class="t b blue" style="left:919.6px;top:186px">Exportar</span>

<div class="tab" style="left:1008.25px;width:119.25px"></div>
<svg class="ic" style="left:1016px;top:187px" viewBox="0 0 16 16"><use href="#i-import"/></svg>
<span class="t b blue" style="left:1043.1px;top:186px">Importar</span>

<div class="tab" style="left:1133.25px;width:136.25px"></div>
<svg class="ic" style="left:1141px;top:187px" viewBox="0 0 16 16"><use href="#i-rights"/></svg>
<span class="t b blue" style="left:1169.1px;top:186px">Privilegios</span>

<div class="tab" style="left:1275px;width:153.75px"></div>
<svg class="ic" style="left:1283px;top:187px" viewBox="0 0 16 16"><use href="#i-ops"/></svg>
<span class="t b blue" style="left:1310.6px;top:186px">Operaciones</span>

<div class="tab" style="left:1434.25px;width:161px"></div>
<svg class="ic" style="left:1443px;top:186px" viewBox="0 0 16 16"><use href="#i-trig"/></svg>
<span class="t b blue" style="left:1470px;top:186px">Disparadores</span>

<!-- success message -->
<div class="abs" style="left:308px;top:224px;width:1284px;height:29.5px;background:#f0fff0;border:2px solid #00ff00"></div>
<svg class="ic" style="left:359px;top:229px" viewBox="0 0 16 16"><use href="#i-ok"/></svg>
<span class="t" style="left:385px;top:229px">Mostrando filas 0 - 5 (total de 6, La consulta tardó 0.0002 segundos.)</span>
<!-- sql box -->
<div class="abs" style="left:308px;top:253px;width:1284px;height:54px;background:#d3dce3;border:1px solid #000;border-top:0"></div>
<div class="abs" style="left:309px;top:253px;width:1282px;height:22.5px;background:#e5e5e5"></div>
<span class="t" style="left:313px;top:254.800px;font-family:'DejaVu Sans Mono','Liberation Mono',monospace;font-size:12.2px"><span style="color:#800080;border-bottom:1px dotted #555">SELECT</span> * <span style="color:#800080">FROM</span> <span style="color:#0055aa">`alumno`</span></span>
<div class="cb" style="left:850px;top:283px"></div>
<span class="t" style="left:870px;top:280px">Perfilando [ <a>Editar en línea</a> ] [ <a>Editar</a> ] [ <a>Explicar SQL</a> ] [ <a>Crear código PHP</a> ] [ <a>Actualizar</a> ]</span>

<!-- nav box 1 -->
<div class="navbox" style="top:320px"></div>
<div class="cb" style="left:334px;top:327px"></div>
<span class="t" style="left:354px;top:323.5px">Mostrar todo</span>
<span class="t" style="left:466.500px;top:327px;color:#444;transform:scaleX(.75)">|</span>
<span class="t" style="left:479px;top:323.5px">Número de filas:</span>
<div class="sel" style="left:632px;top:322px;width:65px;height:27px"></div>
<span class="t fxfont" style="left:639px;top:326px;font-size:16px">25</span>
<svg class="abs" style="left:677px;top:330px" width="12" height="10" viewBox="0 0 12 10"><path d="M1.5 2.5L6 7L10.5 2.5" fill="none" stroke="#111" stroke-width="1.8"/></svg>
<span class="t" style="left:730px;top:323.5px">Filtrar filas:</span>
<div class="inp" style="left:821px;top:321px;width:214px;height:28px"></div>
<span class="t fxfont" style="left:826.500px;top:325.800px;font-size:15.800px;color:#8a8a8a">Buscar en esta tabla</span>

<!-- sort by key -->
<span class="t" style="left:308px;top:365.5px">Ordenar según la clave:</span>
<div class="sel" style="left:509px;top:362.5px;width:232px;height:28px"></div>
<span class="t fxfont" style="left:517px;top:367px;font-size:16px">Ninguna</span>
<svg class="abs" style="left:721px;top:372px" width="12" height="10" viewBox="0 0 12 10"><path d="M1.5 2.5L6 7L10.5 2.5" fill="none" stroke="#111" stroke-width="1.8"/></svg>

<a class="t" style="left:308px;top:412px">+ Opciones</a>

<!-- data table -->
<div class="c" style="left:311px;top:433px;width:327px;height:27px;background:#d3dce3"><svg class="abs" style="left:133px;top:2px" width="60" height="24" viewBox="0 0 60 24"><path d="M1 11.500L6 7.500V10.600H18.500V12.400H6V15.500Z" fill="#5c6cb4"/><path d="M59 11.500L54 7.500V10.600H41.500V12.400H54V15.500Z" fill="#5c6cb4"/><text x="19.600" y="21.200" font-family="'Liberation Sans','DejaVu Sans',sans-serif" font-size="25.500" fill="#5c6cb4" stroke="#5c6cb4" stroke-width=".5" transform="scale(1.290 1)" transform-origin="19.600 0">T</text></svg><svg class="abs" style="left:299px;top:8.500px" width="14.500" height="9" viewBox="0 0 16 10"><path d="M1.200 .8H14.800L8 8.800Z" fill="#7c7c7c" stroke="#333" stroke-width="1.100"/></svg></div>
<div class="c" style="left:640px;top:433px;width:104px;height:27px;background:#d3dce3"><span class="abs b blue" style="left:8.7px;top:3.3px">IdAlumno</span></div>
<div class="c" style="left:747px;top:433px;width:89px;height:27px;background:#d3dce3"><span class="abs b blue" style="left:8.7px;top:3.3px">Nombre</span></div>
<div class="c" style="left:839px;top:433px;width:148px;height:27px;background:#d3dce3"><span class="abs b blue" style="left:8.7px;top:3.3px">Fecha_ingreso</span></div>
<div class="c" style="left:989px;top:433px;width:86px;height:27px;background:#d3dce3"><span class="abs b blue" style="left:8.7px;top:3.3px">IdSalon</span></div>
<div class="c" style="left:311px;top:463px;width:41px;height:27px;background:#e5e5e5"><div class="cb" style="left:13px;top:5.5px"></div></div>
<div class="c" style="left:355px;top:463px;width:90px;height:27px;background:#e5e5e5"><svg class="ic" style="left:8px;top:4px" viewBox="0 0 16 16"><use href="#i-edit"/></svg><a class="abs" style="left:33.5px;top:1.5px">Editar</a></div>
<div class="c" style="left:448px;top:463px;width:94px;height:27px;background:#e5e5e5"><svg class="ic" style="left:8px;top:4px" viewBox="0 0 16 16"><use href="#i-ins"/></svg><a class="abs" style="left:33.5px;top:1.5px">Copiar</a></div>
<div class="c" style="left:545px;top:463px;width:93px;height:27px;background:#e5e5e5"><svg class="ic" style="left:8px;top:4px" viewBox="0 0 16 16"><use href="#i-drop"/></svg><a class="abs" style="left:33.5px;top:1.5px">Borrar</a></div>
<div class="c" style="left:640px;top:463px;width:104px;height:27px;background:#e5e5e5"><span class="abs" style="right:8.2px;top:1.5px">1</span></div>
<div class="c" style="left:747px;top:463px;width:89px;height:27px;background:#e5e5e5"><span class="abs" style="left:8.2px;top:1.5px">Juan</span></div>
<div class="c" style="left:839px;top:463px;width:148px;height:27px;background:#e5e5e5"><span class="abs" style="left:8.2px;top:1.5px">2020-01-01</span></div>
<div class="c" style="left:989px;top:463px;width:86px;height:27px;background:#e5e5e5"><a class="abs" style="right:8.2px;top:1.5px">1</a></div>
<div class="c" style="left:311px;top:492px;width:41px;height:28px;background:#d5d5d5"><div class="cb" style="left:13px;top:5.5px"></div></div>
<div class="c" style="left:355px;top:492px;width:90px;height:28px;background:#d5d5d5"><svg class="ic" style="left:8px;top:4px" viewBox="0 0 16 16"><use href="#i-edit"/></svg><a class="abs" style="left:33.5px;top:2.5px">Editar</a></div>
<div class="c" style="left:448px;top:492px;width:94px;height:28px;background:#d5d5d5"><svg class="ic" style="left:8px;top:4px" viewBox="0 0 16 16"><use href="#i-ins"/></svg><a class="abs" style="left:33.5px;top:2.5px">Copiar</a></div>
<div class="c" style="left:545px;top:492px;width:93px;height:28px;background:#d5d5d5"><svg class="ic" style="left:8px;top:4px" viewBox="0 0 16 16"><use href="#i-drop"/></svg><a class="abs" style="left:33.5px;top:2.5px">Borrar</a></div>
<div class="c" style="left:640px;top:492px;width:104px;height:28px;background:#d5d5d5"><span class="abs" style="right:8.2px;top:2.5px">2</span></div>
<div class="c" style="left:747px;top:492px;width:89px;height:28px;background:#d5d5d5"><span class="abs" style="left:8.2px;top:2.5px">Pepe</span></div>
<div class="c" style="left:839px;top:492px;width:148px;height:28px;background:#d5d5d5"><span class="abs" style="left:8.2px;top:2.5px">2020-01-01</span></div>
<div class="c" style="left:989px;top:492px;width:86px;height:28px;background:#d5d5d5"><a class="abs" style="right:8.2px;top:2.5px">1</a></div>
<div class="c" style="left:311px;top:522px;width:41px;height:27px;background:#e5e5e5"><div class="cb" style="left:13px;top:5.5px"></div></div>
<div class="c" style="left:355px;top:522px;width:90px;height:27px;background:#e5e5e5"><svg class="ic" style="left:8px;top:4px" viewBox="0 0 16 16"><use href="#i-edit"/></svg><a class="abs" style="left:33.5px;top:2.5px">Editar</a></div>
<div class="c" style="left:448px;top:522px;width:94px;height:27px;background:#e5e5e5"><svg class="ic" style="left:8px;top:4px" viewBox="0 0 16 16"><use href="#i-ins"/></svg><a class="abs" style="left:33.5px;top:2.5px">Copiar</a></div>
<div class="c" style="left:545px;top:522px;width:93px;height:27px;background:#e5e5e5"><svg class="ic" style="left:8px;top:4px" viewBox="0 0 16 16"><use href="#i-drop"/></svg><a class="abs" style="left:33.5px;top:2.5px">Borrar</a></div>
<div class="c" style="left:640px;top:522px;width:104px;height:27px;background:#e5e5e5"><span class="abs" style="right:8.2px;top:2.5px">3</span></div>
<div class="c" style="left:747px;top:522px;width:89px;height:27px;background:#e5e5e5"><span class="abs" style="left:8.2px;top:2.5px">Maria</span></div>
<div class="c" style="left:839px;top:522px;width:148px;height:27px;background:#e5e5e5"><span class="abs" style="left:8.2px;top:2.5px">2020-01-01</span></div>
<div class="c" style="left:989px;top:522px;width:86px;height:27px;background:#e5e5e5"><a class="abs" style="right:8.2px;top:2.5px">2</a></div>
<div class="c" style="left:311px;top:552px;width:41px;height:27px;background:#d5d5d5"><div class="cb" style="left:13px;top:5.5px"></div></div>
<div class="c" style="left:355px;top:552px;width:90px;height:27px;background:#d5d5d5"><svg class="ic" style="left:8px;top:4px" viewBox="0 0 16 16"><use href="#i-edit"/></svg><a class="abs" style="left:33.5px;top:2.5px">Editar</a></div>
<div class="c" style="left:448px;top:552px;width:94px;height:27px;background:#d5d5d5"><svg class="ic" style="left:8px;top:4px" viewBox="0 0 16 16"><use href="#i-ins"/></svg><a class="abs" style="left:33.5px;top:2.5px">Copiar</a></div>
<div class="c" style="left:545px;top:552px;width:93px;height:27px;background:#d5d5d5"><svg class="ic" style="left:8px;top:4px" viewBox="0 0 16 16"><use href="#i-drop"/></svg><a class="abs" style="left:33.5px;top:2.5px">Borrar</a></div>
<div class="c" style="left:640px;top:552px;width:104px;height:27px;background:#d5d5d5"><span class="abs" style="right:8.2px;top:2.5px">4</span></div>
<div class="c" style="left:747px;top:552px;width:89px;height:27px;background:#d5d5d5"><span class="abs" style="left:8.2px;top:2.5px">Tere</span></div>
<div class="c" style="left:839px;top:552px;width:148px;height:27px;background:#d5d5d5"><span class="abs" style="left:8.2px;top:2.5px">2020-01-01</span></div>
<div class="c" style="left:989px;top:552px;width:86px;height:27px;background:#d5d5d5"><a class="abs" style="right:8.2px;top:2.5px">2</a></div>
<div class="c" style="left:311px;top:582px;width:41px;height:27px;background:#e5e5e5"><div class="cb" style="left:13px;top:5.5px"></div></div>
<div class="c" style="left:355px;top:582px;width:90px;height:27px;background:#e5e5e5"><svg class="ic" style="left:8px;top:4px" viewBox="0 0 16 16"><use href="#i-edit"/></svg><a class="abs" style="left:33.5px;top:1.5px">Editar</a></div>
<div class="c" style="left:448px;top:582px;width:94px;height:27px;background:#e5e5e5"><svg class="ic" style="left:8px;top:4px" viewBox="0 0 16 16"><use href="#i-ins"/></svg><a class="abs" style="left:33.5px;top:1.5px">Copiar</a></div>
<div class="c" style="left:545px;top:582px;width:93px;height:27px;background:#e5e5e5"><svg class="ic" style="left:8px;top:4px" viewBox="0 0 16 16"><use href="#i-drop"/></svg><a class="abs" style="left:33.5px;top:1.5px">Borrar</a></div>
<div class="c" style="left:640px;top:582px;width:104px;height:27px;background:#e5e5e5"><span class="abs" style="right:8.2px;top:1.5px">5</span></div>
<div class="c" style="left:747px;top:582px;width:89px;height:27px;background:#e5e5e5"><span class="abs" style="left:8.2px;top:1.5px">Eva</span></div>
<div class="c" style="left:839px;top:582px;width:148px;height:27px;background:#e5e5e5"><span class="abs" style="left:8.2px;top:1.5px">2020-01-01</span></div>
<div class="c" style="left:989px;top:582px;width:86px;height:27px;background:#e5e5e5"><a class="abs" style="right:8.2px;top:1.5px">4</a></div>
<div class="c" style="left:311px;top:612px;width:41px;height:27px;background:#d5d5d5"><div class="cb" style="left:13px;top:5.5px"></div></div>
<div class="c" style="left:355px;top:612px;width:90px;height:27px;background:#d5d5d5"><svg class="ic" style="left:8px;top:4px" viewBox="0 0 16 16"><use href="#i-edit"/></svg><a class="abs" style="left:33.5px;top:1.5px">Editar</a></div>
<div class="c" style="left:448px;top:612px;width:94px;height:27px;background:#d5d5d5"><svg class="ic" style="left:8px;top:4px" viewBox="0 0 16 16"><use href="#i-ins"/></svg><a class="abs" style="left:33.5px;top:1.5px">Copiar</a></div>
<div class="c" style="left:545px;top:612px;width:93px;height:27px;background:#d5d5d5"><svg class="ic" style="left:8px;top:4px" viewBox="0 0 16 16"><use href="#i-drop"/></svg><a class="abs" style="left:33.5px;top:1.5px">Borrar</a></div>
<div class="c" style="left:640px;top:612px;width:104px;height:27px;background:#d5d5d5"><span class="abs" style="right:8.2px;top:1.5px">6</span></div>
<div class="c" style="left:747px;top:612px;width:89px;height:27px;background:#d5d5d5"><span class="abs" style="left:8.2px;top:1.5px">Andres</span></div>
<div class="c" style="left:839px;top:612px;width:148px;height:27px;background:#d5d5d5"><span class="abs" style="left:8.2px;top:1.5px">2020-01-01</span></div>
<div class="c" style="left:989px;top:612px;width:86px;height:27px;background:#d5d5d5"><a class="abs" style="right:8.2px;top:1.5px">4</a></div>



<!-- with-selected row -->
<svg class="abs" style="left:324px;top:644px" width="38" height="20" viewBox="0 0 38 20"><path d="M6.5 17.5V4M6.5 17.5H35" fill="none" stroke="#000" stroke-width="1.6"/><path d="M2 9L6.5 1.5L11 9Z" fill="#000"/></svg>
<div class="cb" style="left:375px;top:647px"></div>
<a class="t" style="left:401px;top:643.500px">Marcar todos</a>
<span class="t" style="left:545px;top:644px;font-style:italic">Para los elementos que están marcados:</span>
<svg class="ic" style="left:896px;top:646px" viewBox="0 0 16 16"><use href="#i-edit"/></svg>
<a class="t" style="left:920px;top:645.500px;font-size:14.600px">Editar</a>
<svg class="ic" style="left:981px;top:646px" viewBox="0 0 16 16"><use href="#i-drop"/></svg>
<a class="t" style="left:1007px;top:645.500px;font-size:14.600px">Borrar</a>
<svg class="ic" style="left:1073px;top:646px" viewBox="0 0 16 16"><use href="#i-export"/></svg>
<a class="t" style="left:1097px;top:645.500px;font-size:14.600px">Exportar</a>

<!-- nav box 2 -->
<div class="navbox" style="top:682px;height:29px"></div>
<div class="cb" style="left:334px;top:688.5px"></div>
<span class="t" style="left:354px;top:686px">Mostrar todo</span>
<span class="t" style="left:466px;top:686.5px">|</span>
<span class="t" style="left:479px;top:686px">Número de filas:</span>
<div class="sel" style="left:632px;top:683.5px;width:65px;height:27px"></div>
<span class="t fxfont" style="left:639px;top:687.5px;font-size:16px">25</span>
<svg class="abs" style="left:677px;top:691.5px" width="12" height="10" viewBox="0 0 12 10"><path d="M1.5 2.5L6 7L10.5 2.5" fill="none" stroke="#111" stroke-width="1.8"/></svg>
<span class="t" style="left:730px;top:686px">Filtrar filas:</span>
<div class="inp" style="left:821px;top:683px;width:214px;height:27px"></div>
<span class="t fxfont" style="left:826.500px;top:687.300px;font-size:15.800px;color:#8a8a8a">Buscar en esta tabla</span>

<!-- fieldset -->
<div class="abs" style="left:311px;top:737px;width:1278px;height:50px;background:#e5e5e5;border:1.200px solid #000"></div>
<span class="t b" style="left:319.500px;top:728.500px;padding:0 3.500px;background:linear-gradient(#f5f5f5 0,#f5f5f5 8.500px,#e5e5e5 8.500px);color:#444">Operaciones sobre los resultados de la consulta</span>
<svg class="ic" style="left:325px;top:758px" viewBox="0 0 16 16"><use href="#i-print"/></svg>
<a class="t" style="left:350px;top:757px">Vista de impresión</a>
<svg class="ic" style="left:512px;top:758px" viewBox="0 0 16 16"><use href="#i-print"/></svg>
<a class="t" style="left:537.5px;top:757px">Previsualización para imprimir (documento completo)</a>
<svg class="ic" style="left:988px;top:758px" viewBox="0 0 16 16"><use href="#i-export"/></svg>
<a class="t" style="left:1013px;top:757px">Exportar</a>
<svg class="ic" style="left:1094px;top:758px" viewBox="0 0 16 16"><use href="#i-chart"/></svg>
<a class="t" style="left:1119px;top:757px">Mostrar gráfico</a>
<svg class="ic" style="left:1254px;top:758px" viewBox="0 0 16 16"><use href="#i-view"/></svg>
<a class="t" style="left:1279px;top:757px">Crear vista</a>

<!-- console -->
<div class="abs" style="left:313px;top:824px;width:1274px;height:1px;background:#b4b4b4"></div>
<div class="abs" style="left:304px;top:831px;width:93.500px;height:23px;background:#cfcfcf;border-radius:0 4px 0 0"></div>
<svg class="abs" style="left:310.500px;top:835.500px" width="17" height="17" viewBox="0 0 17 17"><defs><linearGradient id="g-con" x1="0" y1="0" x2="1" y2="1"><stop offset="0" stop-color="#555"/><stop offset="1" stop-color="#1a1a1a"/></linearGradient></defs><rect x=".5" y=".5" width="16" height="16" rx="2" fill="#f4f4f4" stroke="#dcdcdc"/><rect x="2" y="5" width="13" height="10" fill="url(#g-con)"/></svg>
<span class="t" style="left:329px;top:835px">Consola</span>
<svg class="ic" style="left:1567px;top:827px" viewBox="0 0 16 16"><use href="#i-win"/></svg>
<!-- page-top icon -->
<svg class="abs" style="left:1576.500px;top:156px" width="16" height="16" viewBox="0 0 16 16"><path d="M2 2H14" stroke="#b0b0b0" stroke-width="1.6" fill="none"/><path d="M2.5 13L8 7L13.5 13" stroke="#b0b0b0" stroke-width="2.2" fill="none"/></svg>
<!-- scrollbar -->
<div class="abs" style="left:1595px;top:151px;width:3px;height:684.500px;background:#66686b;border-radius:1.500px"></div>

</div>


<!-- BOTTOM BAR -->
<div id="gbot">
<div class="tb" style="left:5.500px;top:5.500px;width:29px;height:35px"></div>
<svg class="abs" style="left:12px;top:17px" width="16" height="14" viewBox="0 0 16 14"><rect x="7" y="1" width="7.500" height="6" fill="none" stroke="#2e3436" stroke-width="2"/><path d="M1.200 7V12.500H8" fill="none" stroke="#2e3436" stroke-width="2"/><path d="M1 6.200H5.500" stroke="#2e3436" stroke-width="2"/></svg>
<div class="tb" style="left:40.500px;top:3.500px;width:325px;height:38.500px"></div>
<!-- seamonkey -->
<svg class="abs" style="left:47px;top:11px" width="24" height="25" viewBox="0 0 24 25"><circle cx="12" cy="12.500" r="11.500" fill="#1a1ab8"/><circle cx="10" cy="9" r="7" fill="#2a3ae0" opacity=".6"/><path d="M2 22C6 20 9 15 11.500 9.500C12.500 6.500 15 3.500 18.500 2.500C20.500 2.200 21.500 3.500 20.500 5C18.500 5.200 17.800 7 17.800 9C17.800 14 12 20 2 22Z" fill="#a8d4f8"/><path d="M4 20.500C8 18 11 14 13 9" stroke="#e8f6ff" stroke-width="1" fill="none"/></svg>
<span class="abs" style="left:75px;top:13.700px;line-height:20px;white-space:pre;font-size:16.200px">Capitulo 2 de SQL com MyAdminPH...</span>
<div class="tb" style="left:370px;top:3.500px;width:326px;height:38.500px;background:#d2d2d2;border-color:#c2c2c2"></div>
<!-- firefox -->
<svg class="abs" style="left:377px;top:10.500px" width="24" height="25" viewBox="0 0 24 25"><path d="M13 .5C15 2 16.500 3.500 17 6L12 5C12.500 3.500 13.200 2 13 .5Z" fill="#ffd43a"/><circle cx="12" cy="13.500" r="10.500" fill="#ff7a1a"/><path d="M3 8C4.500 4 8 2 11 3C9.500 4 9.500 5.500 10.500 6.500C13 6.500 15.500 8 15.500 11C15.500 14 13 15.500 10.500 15C8 14.500 7 12.500 7.500 11C5.500 11.500 5 14.500 6.500 17C3.500 15.500 1.500 12 3 8Z" fill="#ffbd2e"/><path d="M14 1C17.500 3 21.500 6 22.300 11.500C22.500 9 22 6 20.500 4.500C21.500 7 20.500 8 19.500 7C18.500 4.500 16.500 2.500 14 1Z" fill="#ff9a1a"/><circle cx="11.500" cy="12" r="4.700" fill="#7a42d8"/><path d="M7 10.500C8.500 9 10.500 9 12.500 9.500C11 10 10.500 11.500 11.500 12.500C9.500 13 7.500 12.500 7 10.500Z" fill="#ff5a3a"/><path d="M1.800 14C2.500 19.500 7 23.800 12.500 23.800C18 23.800 22.500 19.500 22.500 13.500C21.500 18 17.500 20.500 13 20.500C8 20.500 3.500 18 1.800 14Z" fill="#ff3a5a"/></svg>
<span class="abs" style="left:405.500px;top:13.700px;line-height:20px;white-space:pre;font-size:16.700px">127.0.0.1 / localhost / escuela_ejem...</span>
<div class="tb" style="left:700px;top:3.500px;width:326px;height:38.500px"></div>
<!-- file cabinet -->
<svg class="abs" style="left:710px;top:13px" width="18" height="21" viewBox="0 0 18 21"><rect x=".8" y=".8" width="16.400" height="19.400" rx="2" fill="#3a6ec8" stroke="#1e4a9a" stroke-width="1.200"/><rect x="3" y="3" width="12" height="6.500" rx=".8" fill="#7aa6ee"/><rect x="3" y="11.500" width="12" height="6.500" rx=".8" fill="#7aa6ee"/><path d="M6.500 5.200H11.500V7H6.500ZM6.500 13.700H11.500V15.500H6.500Z" fill="#e8f0ff" stroke="#1e4a9a" stroke-width=".6"/></svg>
<span class="abs" style="left:735px;top:13.700px;line-height:20px;white-space:pre;font-size:16.400px">images2</span>
<!-- workspaces -->
<div class="abs" style="left:1363px;top:5px;width:53px;height:4px;background:#d4d4d4;border-radius:2px 2px 0 0"></div>
<div class="abs" style="left:1363px;top:7px;width:52px;height:32.500px;background:#f6f5f4;border:2px solid #7f7f7f"></div>
<div class="abs" style="left:1419px;top:5px;width:54px;height:35px;background:#dcdcdc;border:1px solid #cecece"></div>
<div class="abs" style="left:1476px;top:5px;width:54px;height:35px;background:#dcdcdc;border:1px solid #cecece"></div>
<div class="abs" style="left:1533px;top:5px;width:54px;height:35px;background:#dcdcdc;border:1px solid #cecece;border-radius:0 5px 5px 0"></div>
</div>

</div>
</body>
</html>
